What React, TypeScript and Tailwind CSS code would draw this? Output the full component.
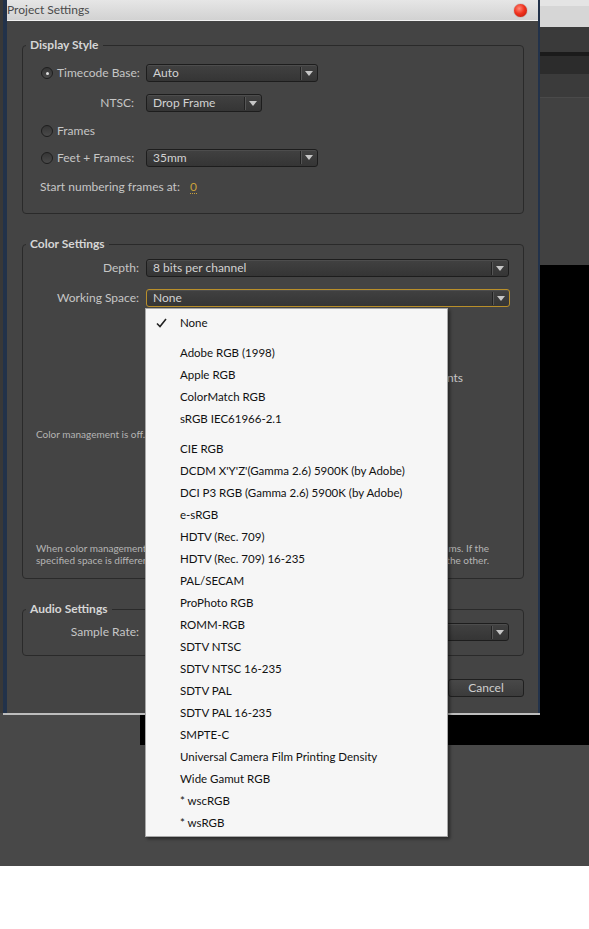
import React from 'react';

const font = { fontFamily: 'Lato, "Open Sans", sans-serif' };

function Select({ className, value, focused = false }: { className: string; value: string; focused?: boolean }) {
  return (
    <div
      className={`flex h-[18px] items-center rounded-[3px] border bg-linear-to-b from-[#414141] to-[#353535] shadow-[inset_0_1px_0_#4d4d4d] ${
        focused ? 'border-[#b98f2a]' : 'border-[#1d1d1d]'
      } ${className}`}
    >
      <span className="flex-1 truncate pl-[6px] text-[12px] leading-[16px] text-[#d2d2d2]">{value}</span>
      <span className="h-[13px] w-px bg-[#222] shadow-[1px_0_0_#555]" />
      <span className="flex w-[16px] items-center justify-center">
        <svg width="8" height="5" viewBox="0 0 8 5">
          <path d="M0 0h8L4 5z" fill="#c6c6c6" />
        </svg>
      </span>
    </div>
  );
}

function Radio({ checked = false }: { checked?: boolean }) {
  return (
    <span className="flex h-[12px] w-[12px] items-center justify-center rounded-full border border-[#1e1e1e] bg-linear-to-b from-[#363636] to-[#4a4a4a]">
      {checked && <span className="h-[3px] w-[3px] rounded-full bg-[#e0e0e0]" />}
    </span>
  );
}

function Group({ title, className, children }: { title: string; className: string; children: React.ReactNode }) {
  return (
    <fieldset className={`ml-[15px] mr-[14px] rounded-[4px] border border-[#2a2a2a] ${className}`}>
      <legend className="ml-[3px] px-[4px] text-[12px] leading-[16px] font-bold text-[#d6d6d6]">{title}</legend>
      {children}
    </fieldset>
  );
}

const menuGroups = [
  ['None'],
  ['Adobe RGB (1998)', 'Apple RGB', 'ColorMatch RGB', 'sRGB IEC61966-2.1'],
  [
    'CIE RGB',
    "DCDM X'Y'Z'(Gamma 2.6) 5900K (by Adobe)",
    'DCI P3 RGB (Gamma 2.6) 5900K (by Adobe)',
    'e-sRGB',
    'HDTV (Rec. 709)',
    'HDTV (Rec. 709) 16-235',
    'PAL/SECAM',
    'ProPhoto RGB',
    'ROMM-RGB',
    'SDTV NTSC',
    'SDTV NTSC 16-235',
    'SDTV PAL',
    'SDTV PAL 16-235',
    'SMPTE-C',
    'Universal Camera Film Printing Density',
    'Wide Gamut RGB',
    '* wscRGB',
    '* wsRGB'
  ]
];

export default function App() {
  return (
    <div className="relative h-[929px] w-[589px] overflow-hidden bg-white" style={font}>
      {/* application behind the dialog */}
      <div className="flex flex-col">
        <div className="h-[27px] border-t-[6px] border-[#e4e4e4] bg-[#d6d6d6]" />
        <div className="h-[25px] bg-[#3a3a3a]" />
        <div className="h-[4px] bg-[#1b1b1b]" />
        <div className="h-[18px] bg-[#2c2c2c]" />
        <div className="h-[24px] border-b border-[#4a4a4a] bg-[#3b3b3b]" />
        <div className="h-[167px] bg-[#414141]" />
        <div className="flex h-[480px]">
          <div className="w-[140px] bg-[#484848]" />
          <div className="flex-1 bg-black" />
        </div>
        <div className="h-[121px] bg-[#484848]" />
      </div>

      {/* Project Settings dialog */}
      <div className="absolute left-0 top-0 w-[540px] bg-[#383838] pl-[3px]">
        <div className="border-l-[4px] border-r-[2px] border-[#22324a] bg-[#444444] shadow-[0_2px_0_#bdbdbd]">
          <div className="flex h-[21px] items-center justify-between border-b border-[#f2f2f2] bg-linear-to-b from-[#e6e6e6] to-[#d2d2d2] pr-[11px]">
            <span className="text-[12px] text-[#4a4a4a]">Project Settings</span>
            <span className="h-[13px] w-[13px] rounded-full bg-[radial-gradient(circle_at_40%_35%,#ff8a7a_0%,#f0321e_45%,#b81405_100%)] shadow-[0_0_1px_#7a1a10]" />
          </div>

          <Group title="Display Style" className="mt-[16px]">
            <div className="pb-[10px] pl-[18px] pt-[5px] text-[12px] text-[#c6c6c6]">
              <div className="flex h-[30px] items-center">
                <div className="flex w-[105px] items-center gap-[4px]">
                  <Radio checked />
                  <span>Timecode Base:</span>
                </div>
                <Select className="w-[172px]" value="Auto" />
              </div>
              <div className="flex h-[30px] items-center">
                <div className="w-[105px] pr-[12px] text-right">NTSC:</div>
                <Select className="w-[116px]" value="Drop Frame" />
              </div>
              <div className="flex h-[26px] items-center gap-[4px]">
                <Radio />
                <span>Frames</span>
              </div>
              <div className="flex h-[27px] items-center">
                <div className="flex w-[105px] items-center gap-[4px]">
                  <Radio />
                  <span>Feet + Frames:</span>
                </div>
                <Select className="w-[172px]" value="35mm" />
              </div>
              <div className="-ml-px flex h-[32px] items-center gap-[10px]">
                <span>Start numbering frames at:</span>
                <span className="border-b border-dotted border-[#c9a03a] leading-[13px] text-[#c9a03a]">0</span>
              </div>
            </div>
          </Group>

          <Group title="Color Settings" className="mt-[22px]">
            <div className="pb-[12px] pt-[3px] text-[12px] text-[#c6c6c6]">
              <div className="flex h-[26px] items-center pl-[18px]">
                <div className="w-[105px] pr-[7px] text-right">Depth:</div>
                <Select className="w-[363px]" value="8 bits per channel" />
              </div>
              <div className="flex h-[34px] items-center pl-[18px]">
                <div className="w-[105px] whitespace-nowrap pr-[7px] text-right">Working Space:</div>
                <Select className="w-[364px]" value="None" focused />
              </div>
              <div className="mt-[56px] flex h-[14px] items-center">
                <div className="ml-[150px] w-[290px] overflow-hidden whitespace-nowrap text-right leading-[14px]">
                  Display color management for viewer adjustments
                </div>
              </div>
              <div className="mt-[42px] h-[14px] pl-[13px] text-[10px] leading-[14px] text-[#b4b4b4]">
                Color management is off. The working space has no effect.
              </div>
              <div className="mt-[101px] pl-[13px] pr-[34px] text-[10px] leading-[12px] text-[#b4b4b4]">
                <div className="flex justify-between whitespace-nowrap">
                  <span>When color management is on, colors are</span>
                  <span>converted for other programs. If the</span>
                </div>
                <div className="flex justify-between whitespace-nowrap">
                  <span>specified space is different from the</span>
                  <span>source, one is converted to the other.</span>
                </div>
              </div>
            </div>
          </Group>

          <Group title="Audio Settings" className="mt-[22px]">
            <div className="pb-[11px] pl-[18px] pt-[3px] text-[12px] text-[#c6c6c6]">
              <div className="flex h-[24px] items-center">
                <div className="w-[105px] pr-[7px] text-right">Sample Rate:</div>
                <Select className="w-[363px]" value="48000 Hz" />
              </div>
            </div>
          </Group>

          <div className="ml-[15px] mr-[14px] mt-[23px] flex justify-end gap-[7px] pb-[16px]">
            <button className="h-[18px] w-[76px] rounded-[3px] border border-[#1f1f1f] bg-linear-to-b from-[#484848] to-[#3b3b3b] text-[12px] leading-none text-[#cfcfcf]">
              OK
            </button>
            <button className="h-[18px] w-[76px] rounded-[3px] border border-[#1f1f1f] bg-linear-to-b from-[#484848] to-[#3b3b3b] text-[12px] leading-none text-[#cfcfcf]">
              Cancel
            </button>
          </div>
        </div>
      </div>

      {/* Working Space dropdown list */}
      <div className="absolute left-[145px] top-[308px] w-[303px] border border-[#a8a8a8] bg-[#f6f6f6] pb-[2px] pt-[3px] shadow-[2px_2px_3px_rgba(0,0,0,0.45)]">
        {menuGroups.map((group, gi) => (
          <div key={gi} className={gi > 0 ? 'mt-[8px]' : ''}>
            {group.map((item) => (
              <div key={item} className="relative flex h-[22px] items-center pl-[34px] text-[11.5px] text-[#111]">
                {item === 'None' && (
                  <svg className="absolute left-[10px] top-[6px]" width="11" height="10" viewBox="0 0 11 10">
                    <path d="M1 5.5 L4 8.5 L10 1" fill="none" stroke="#222" strokeWidth="1.6" />
                  </svg>
                )}
                {item}
              </div>
            ))}
          </div>
        ))}
      </div>
    </div>
  );
}
